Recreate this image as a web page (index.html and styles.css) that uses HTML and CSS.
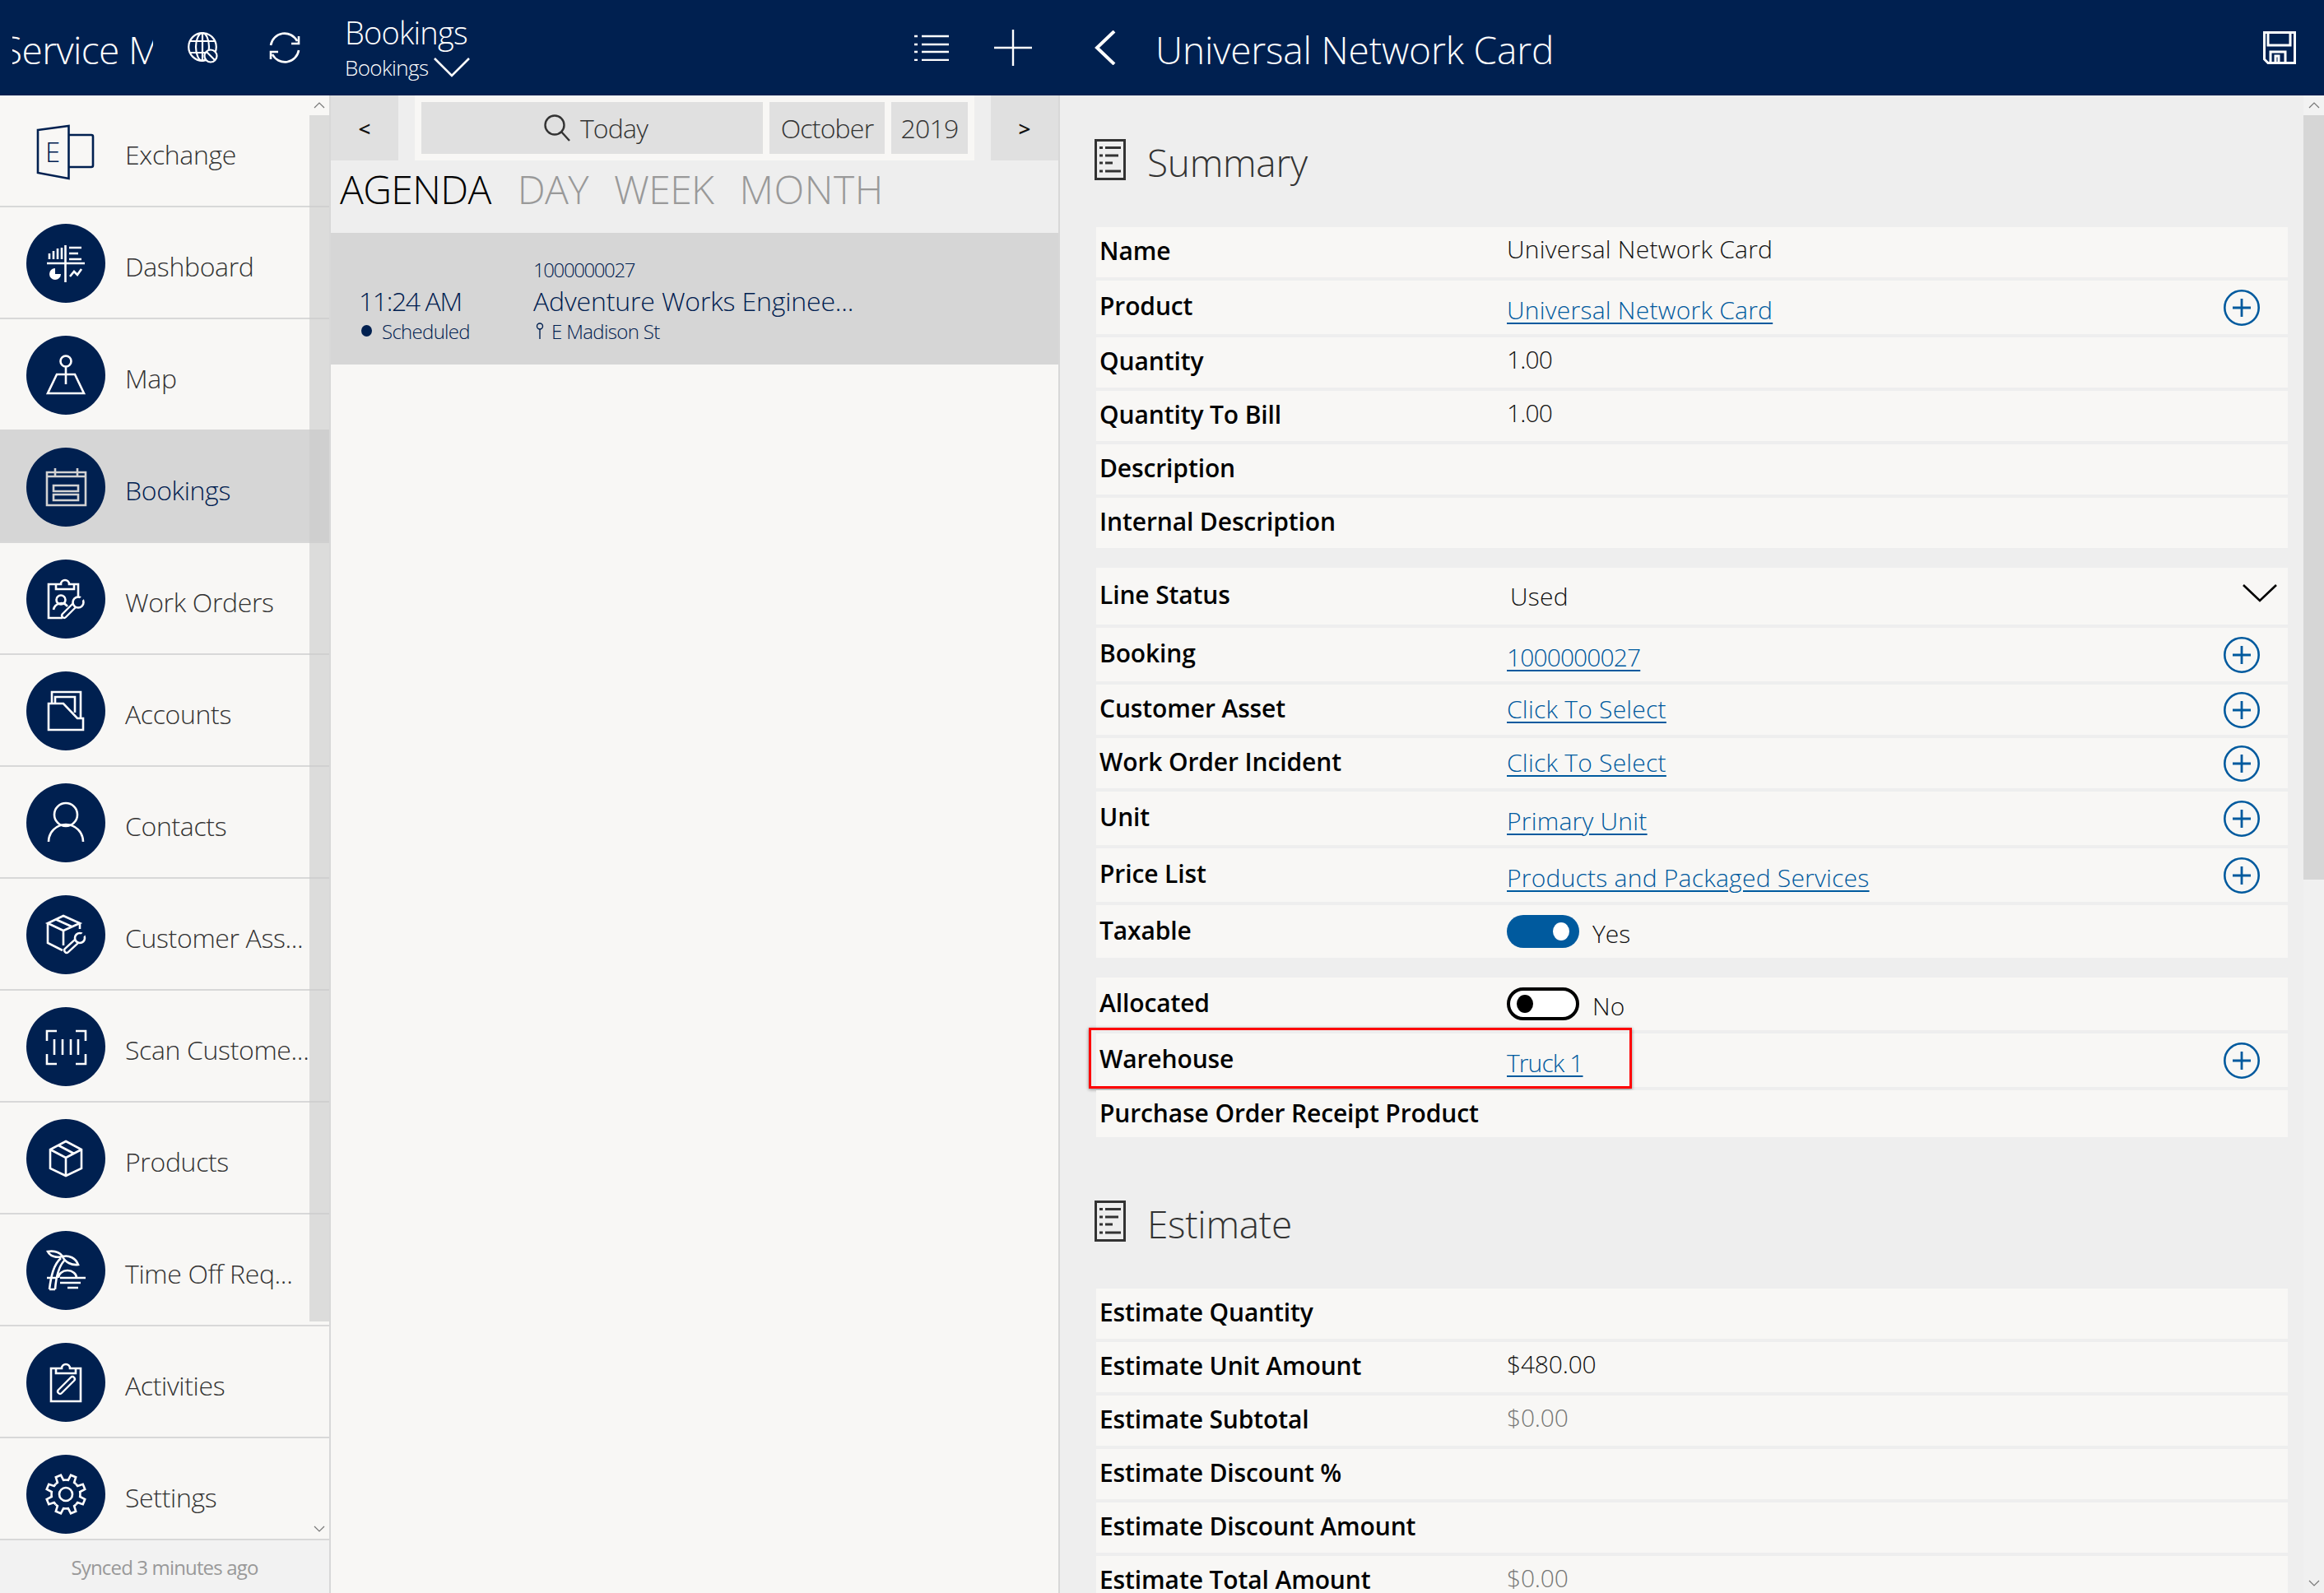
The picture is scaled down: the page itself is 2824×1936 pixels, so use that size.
FILE: index.html
```html
<!DOCTYPE html>
<html lang="en">
<head>
<meta charset="utf-8">
<title>Bookings</title>
<link rel="stylesheet" href="styles.css">
</head>
<body>
<svg class="sprite" xmlns="http://www.w3.org/2000/svg">
  <symbol id="plus" viewBox="0 0 44 44"><circle cx="22" cy="22" r="20.7" fill="none" stroke="#005a9e" stroke-width="2.6"/><path d="M11 22H33M22 11V33" fill="none" stroke="#005a9e" stroke-width="2.8"/></symbol>
  <symbol id="doc" viewBox="0 0 38 50"><path d="M1.5 1.5H36.5V48.5H1.5Z" fill="none" stroke="#333" stroke-width="3"/><path d="M6 10.5H10M13 10.5H32M6 20H10M13 20H29M6 29H10M13 29H22M6 39H10M13 39H32" fill="none" stroke="#333" stroke-width="3"/></symbol>
  <path id="tooth" d="M-6.7-16.2L-3.9-17L-3.3-23.8L3.3-23.8L3.9-17L6.7-16.2"/>
</svg>

<header class="topbar">
  <div class="bar-nav">
    <div class="brand"><span class="brand-text">Service Management</span></div>
    <svg class="ico-globe" viewBox="0 0 38 38"><circle cx="19" cy="18" r="16.8"/><ellipse cx="19" cy="18" rx="8" ry="16.8"/><path d="M19 1V35M4 11H34M4 25H24"/><circle class="fill-nv" cx="29" cy="29" r="7.5"/><path d="M24 24L34 34"/></svg>
    <svg class="ico-sync" viewBox="0 0 38 38"><path d="M2 16A17 17 0 0 1 34 11M36 5V14H27M36 22A17 17 0 0 1 4 27M2 33V24H11"/></svg>
  </div>
  <div class="bar-list">
    <div class="bar-titles">
      <div class="bar-title">Bookings</div>
      <div class="bar-sub">Bookings <svg class="ico-chev" viewBox="0 0 44 24"><path d="M1 1L22 22L43 1"/></svg></div>
    </div>
    <svg class="ico-list" viewBox="0 0 42 32"><path d="M0 2H4M9 2H42M0 12H4M9 12H42M0 21H4M9 21H42M0 31H4M9 31H42"/></svg>
    <svg class="ico-add" viewBox="0 0 46 44"><path d="M0 22H46M23 0V44"/></svg>
  </div>
  <div class="bar-detail">
    <svg class="ico-back" viewBox="0 0 26 42"><path d="M24 1L3 21L24 41"/></svg>
    <div class="detail-title">Universal Network Card</div>
    <svg class="ico-save" viewBox="0 0 40 40"><path d="M1.5 1.5H38.5V38.5H6L1.5 34Z"/><path d="M6 1.5V17H33V1.5M9 38.5V25H27V38.5M15 38.5V30H19V38.5"/></svg>
  </div>
</header>

<main class="main">
  <nav class="nav">
    <div class="nav-list">
      <a class="nav-row">
        <span class="nav-icon"><svg viewBox="0 0 96 96"><path class="navy-line" d="M14 22L51.5 17V81L14 74Z"/><path class="navy-line" d="M52 28H79Q81 28 81 30V65Q81 67 79 67H52"/><text class="ex-e" x="23" y="61">E</text></svg></span>
        <span class="nav-label">Exchange</span>
      </a>
      <a class="nav-row">
        <span class="nav-icon disc"><svg class="ic" viewBox="0 0 96 96"><path d="M25 48H71M47.5 26V71M28 43V36M33 43V33M38 43V30M43 43V29M52 29H67M52 36H63M52 43H67"/><path d="M35 54V61H42A7 7 0 1 1 35 54Z" class="ic-fill"/><path d="M53 64L58 58L62 62L67 55"/></svg></span>
        <span class="nav-label">Dashboard</span>
      </a>
      <a class="nav-row">
        <span class="nav-icon disc"><svg class="ic" viewBox="0 0 96 96"><circle cx="48" cy="31" r="6.5"/><path d="M48 37V59M37 47H59L70 70H26Z"/></svg></span>
        <span class="nav-label">Map</span>
      </a>
      <a class="nav-row active">
        <span class="nav-icon disc"><svg class="ic" viewBox="0 0 96 96"><path d="M25 30H72V70H25ZM25 35H72M35 25V34M62 25V34M33 46H63V53H33ZM33 57H63V64H33Z"/></svg></span>
        <span class="nav-label">Bookings</span>
      </a>
      <a class="nav-row">
        <span class="nav-icon disc"><svg class="ic" viewBox="0 0 96 96"><path d="M37 30H27V71H44M57 30H63V46M36 36H58V30H52A5 5 0 0 0 42 30H36Z"/><circle cx="42" cy="49" r="5.5"/><path d="M33 61A9.5 9.5 0 0 1 50 57"/><path class="wide" d="M46 68L60 54"/><path class="nv" d="M46 68L60 54"/><circle class="fill-nv" cx="63" cy="52" r="6.5"/><path class="nv thin" d="M63 52L70 45"/></svg></span>
        <span class="nav-label">Work Orders</span>
      </a>
      <a class="nav-row">
        <span class="nav-icon disc"><svg class="ic" viewBox="0 0 96 96"><path d="M31 39V25H66V57M35 39V31H59V50M27 71V39H45L62 57H69V71Z"/></svg></span>
        <span class="nav-label">Accounts</span>
      </a>
      <a class="nav-row">
        <span class="nav-icon disc"><svg class="ic" viewBox="0 0 96 96"><circle cx="48" cy="38" r="14"/><path d="M27 71A21 21 0 0 1 69 71"/></svg></span>
        <span class="nav-label">Contacts</span>
      </a>
      <a class="nav-row">
        <span class="nav-icon disc"><svg class="ic" viewBox="0 0 96 96"><path d="M45 25L65 34L45 43L26 34ZM26 34V58L44 67M45 43V61M65 34V41M35 29L55 38"/><path class="wide" d="M49 67L62 55"/><path class="nv" d="M49 67L62 55"/><circle class="fill-nv" cx="65" cy="52" r="6"/><path class="nv thin" d="M65 52L72 45"/></svg></span>
        <span class="nav-label">Customer Ass...</span>
      </a>
      <a class="nav-row">
        <span class="nav-icon disc"><svg class="ic" viewBox="0 0 96 96"><path d="M37 29H25V41M60 29H72V41M25 57V69H37M72 57V69H60M34 39V58M44 39V58M54 39V58M63 39V58"/></svg></span>
        <span class="nav-label">Scan Custome...</span>
      </a>
      <a class="nav-row">
        <span class="nav-icon disc"><svg class="ic" viewBox="0 0 96 96"><path d="M48 27L67 37V60L48 69L29 60V37ZM29 37L48 47L67 37M48 47V69M39 32L58 42"/></svg></span>
        <span class="nav-label">Products</span>
      </a>
      <a class="nav-row">
        <span class="nav-icon disc"><svg class="ic" viewBox="0 0 96 96"><path d="M28 71C30 55 33 41 42 33M35 71C36 57 39 44 46 36M28 71H35M44 31C40 25 33 24 26 25C29 31 37 33 44 31ZM44 31C52 29 60 33 63 41C55 42 47 38 44 31ZM25 57H36M41 57H72M39 57A11 9 0 0 1 61 57M41 63H66M50 69H63"/></svg></span>
        <span class="nav-label">Time Off Req...</span>
      </a>
      <a class="nav-row">
        <span class="nav-icon disc"><svg class="ic" viewBox="0 0 96 96"><path d="M30 31H36V37H60V31H66V71H30ZM36 31H43A5 5 0 0 1 53 31H60"/><path class="wide" d="M41 59L56 44"/><path class="nv" d="M41 59L56 44"/></svg></span>
        <span class="nav-label">Activities</span>
      </a>
      <a class="nav-row">
        <span class="nav-icon disc"><svg class="ic" viewBox="0 0 96 96"><circle cx="48" cy="48" r="8"/><g transform="translate(48 48)"><use href="#tooth" transform="rotate(22.5)"/><use href="#tooth" transform="rotate(67.5)"/><use href="#tooth" transform="rotate(112.5)"/><use href="#tooth" transform="rotate(157.5)"/><use href="#tooth" transform="rotate(202.5)"/><use href="#tooth" transform="rotate(247.5)"/><use href="#tooth" transform="rotate(292.5)"/><use href="#tooth" transform="rotate(337.5)"/></g></svg></span>
        <span class="nav-label">Settings</span>
      </a>
      <div class="nav-scroll">
        <div class="nav-up"><svg class="ico-tiny" viewBox="0 0 14 8"><path d="M1 7L7 1L13 7"/></svg></div>
        <div class="nav-thumb"></div>
        <div class="nav-down"><svg class="ico-tiny" viewBox="0 0 14 8"><path d="M1 1L7 7L13 1"/></svg></div>
      </div>
    </div>
    <div class="nav-foot">Synced 3 minutes ago</div>
  </nav>

  <section class="list">
    <div class="toolbar">
      <button class="step">&lt;</button>
      <div class="date-box">
        <div class="date-cell date-today"><svg class="ico-search" viewBox="0 0 32 33"><circle cx="13" cy="13" r="11.5"/><path d="M21 21L31 32"/></svg>Today</div>
        <div class="date-cell date-month">October</div>
        <div class="date-cell date-year">2019</div>
      </div>
      <button class="step">&gt;</button>
    </div>
    <div class="tabs">
      <span class="tab tab-on">AGENDA</span>
      <span class="tab">DAY</span>
      <span class="tab">WEEK</span>
      <span class="tab tab-wide">MONTH</span>
    </div>
    <div class="agenda">
      <div class="ag-num">1000000027</div>
      <div class="ag-time">11:24 AM</div>
      <div class="ag-title">Adventure Works Enginee...</div>
      <div class="ag-status"><span class="dot"></span>Scheduled</div>
      <div class="ag-addr"><svg class="ico-pin" viewBox="0 0 10 20"><circle cx="5" cy="4.5" r="3.5"/><path d="M5 8V20"/></svg>E Madison St</div>
    </div>
  </section>

  <section class="detail">
    <div class="sec-head"><svg class="ico-doc"><use href="#doc"/></svg><h2 class="sec-title">Summary</h2></div>
    <div class="group">
      <div class="row"><span class="label">Name</span><span class="val">Universal Network Card</span></div>
      <div class="row h65"><span class="label">Product</span><a class="link">Universal Network Card</a><svg class="ico-plus"><use href="#plus"/></svg></div>
      <div class="row"><span class="label">Quantity</span><span class="val num">1.00</span></div>
      <div class="row"><span class="label">Quantity To Bill</span><span class="val num">1.00</span></div>
      <div class="row"><span class="label">Description</span></div>
      <div class="row"><span class="label">Internal Description</span></div>
    </div>
    <div class="group">
      <div class="row h69"><span class="label">Line Status</span><span class="val val-select">Used</span><svg class="ico-drop" viewBox="0 0 42 22"><path d="M1 1L21 20L41 1"/></svg></div>
      <div class="row h65"><span class="label">Booking</span><a class="link num">1000000027</a><svg class="ico-plus"><use href="#plus"/></svg></div>
      <div class="row"><span class="label">Customer Asset</span><a class="link link-flat">Click To Select</a><svg class="ico-plus"><use href="#plus"/></svg></div>
      <div class="row"><span class="label">Work Order Incident</span><a class="link link-flat">Click To Select</a><svg class="ico-plus"><use href="#plus"/></svg></div>
      <div class="row h65"><span class="label">Unit</span><a class="link">Primary Unit</a><svg class="ico-plus"><use href="#plus"/></svg></div>
      <div class="row h65"><span class="label">Price List</span><a class="link">Products and Packaged Services</a><svg class="ico-plus"><use href="#plus"/></svg></div>
      <div class="row h64"><span class="label">Taxable</span><span class="toggle toggle-on"><span class="knob"></span></span><span class="toggle-text">Yes</span></div>
    </div>
    <div class="group">
      <div class="row h64"><span class="label">Allocated</span><span class="toggle toggle-off"><span class="knob"></span></span><span class="toggle-text">No</span></div>
      <div class="row h65 flagged"><span class="label">Warehouse</span><a class="link num">Truck 1</a><svg class="ico-plus"><use href="#plus"/></svg><span class="flag"></span></div>
      <div class="row h57"><span class="label">Purchase Order Receipt Product</span></div>
    </div>
    <div class="sec-head sec-next"><svg class="ico-doc"><use href="#doc"/></svg><h2 class="sec-title">Estimate</h2></div>
    <div class="group">
      <div class="row"><span class="label">Estimate Quantity</span></div>
      <div class="row"><span class="label">Estimate Unit Amount</span><span class="val money">$480.00</span></div>
      <div class="row"><span class="label">Estimate Subtotal</span><span class="val money val-grey">$0.00</span></div>
      <div class="row"><span class="label">Estimate Discount %</span></div>
      <div class="row"><span class="label">Estimate Discount Amount</span></div>
      <div class="row"><span class="label">Estimate Total Amount</span><span class="val money val-grey">$0.00</span></div>
    </div>
    <div class="detail-scroll">
      <div class="d-up"><svg class="ico-tiny" viewBox="0 0 14 8"><path d="M1 7L7 1L13 7"/></svg></div>
      <div class="d-thumb"></div>
      <div class="d-down"><svg class="ico-tiny" viewBox="0 0 14 8"><path d="M1 1L7 7L13 1"/></svg></div>
    </div>
  </section>
</main>
</body>
</html>
```
FILE: styles.css
```css
* { box-sizing: border-box; }
html, body { margin: 0; height: 100%; overflow: hidden; }
body {
  display: flex;
  flex-direction: column;
  width: 2824px;
  height: 1936px;
  background: #f8f7f5;
  font-family: "Open Sans", "Noto Sans", sans-serif;
  font-weight: 300;
  color: #333;
}
svg { display: block; flex: none; }
.sprite { width: 0; height: 0; position: absolute; }
a { color: inherit; text-decoration: none; }

/* Top bar */
.topbar {
  flex: none;
  height: 116px;
  display: flex;
  background: #002050;
  color: #fff;
}
.topbar svg { fill: none; stroke: #fff; }
.bar-nav { width: 402px; flex: none; display: flex; align-items: center; }
.brand { width: 171px; margin-left: 15px; overflow: hidden; white-space: nowrap; font-size: 46px; line-height: 60px; padding-top: 4px; letter-spacing: -0.6px; }
.brand-text { display: block; text-indent: -13px; }
.ico-globe { width: 38px; height: 38px; margin: 0 0 0 41px; stroke-width: 2.2; }
.ico-globe .fill-nv { fill: #002050; }
.ico-sync { width: 38px; height: 38px; margin-left: 62px; stroke-width: 2.6; }
.bar-list { width: 886px; flex: none; display: flex; align-items: flex-start; padding-left: 17px; }
.bar-titles { width: 692px; padding-top: 16px; }
.bar-title { font-size: 38px; line-height: 46px; letter-spacing: -0.8px; }
.bar-sub { display: flex; align-items: center; font-size: 26px; line-height: 32px; letter-spacing: -0.6px; gap: 7px; margin-top: 4px; }
.ico-chev { width: 44px; height: 24px; stroke-width: 2.6; }
.ico-list { width: 42px; height: 32px; margin-top: 42px; stroke-width: 2.4; }
.ico-add { width: 46px; height: 44px; margin: 36px 0 0 55px; stroke-width: 2.4; }
.bar-detail { flex: 1; display: flex; align-items: center; padding: 0 34px 0 42px; }
.ico-back { width: 26px; height: 42px; stroke-width: 4; margin-right: 48px; }
.detail-title { flex: 1; font-size: 46px; line-height: 60px; padding-top: 4px; letter-spacing: -0.15px; }
.ico-save { width: 40px; height: 40px; stroke-width: 3; }

/* Layout */
.main { flex: 1; min-height: 0; display: flex; }

/* Nav */
.nav { width: 402px; flex: none; display: flex; flex-direction: column; }
.nav-list { flex: 1; min-height: 0; position: relative; overflow: hidden; border-bottom: 2px solid #d8d8d8; border-right: 2px solid #d8d8d8; }
.nav-row { display: flex; align-items: flex-start; height: 136px; padding: 20px 0 0 32px; border-bottom: 2px solid #d8d8d8; }
.nav-row.active { background: #d6d6d6; color: #002050; margin-top: -2px; height: 138px; padding-top: 22px; }
.nav-icon { width: 96px; height: 96px; flex: none; border-radius: 50%; }
.disc { background: #002050; }
.nav-icon svg { width: 96px; height: 96px; }
.ic { fill: none; stroke: #fff; stroke-width: 2.6; }
.ic use { stroke: #fff; }
.active .ic { stroke: #d2d2d2; }
.ic .ic-fill { fill: #fff; stroke: none; }
.ic .wide { stroke-width: 8; stroke-linecap: round; }
.ic .nv { stroke: #002050; stroke-width: 3.2; stroke-linecap: round; }
.ic .thin { stroke-width: 4; stroke-linecap: butt; }
.ic .fill-nv { fill: #002050; }
.navy-line { fill: none; stroke: #002050; stroke-width: 2.6; }
.ex-e { font-size: 33px; fill: #002050; font-weight: 300; }
.nav-label { margin-left: 24px; font-size: 32px; line-height: 44px; padding-top: 30px; letter-spacing: -0.35px; white-space: nowrap; box-sizing: content-box; }
.nav-scroll { position: absolute; top: 0; right: 0; bottom: 0; width: 24px; display: flex; flex-direction: column; }
.nav-up { height: 24px; flex: none; background: #f8f7f5; display: flex; align-items: center; justify-content: center; }
.nav-thumb { height: 1466px; flex: none; background: rgba(203, 203, 203, .62); }
.nav-down { flex: 1; display: flex; align-items: flex-end; justify-content: center; padding-bottom: 8px; }
.ico-tiny { width: 14px; height: 8px; fill: none; stroke: #777; stroke-width: 1.2; }
.nav-foot { flex: none; height: 64px; background: #f2f2f2; border-right: 2px solid #d8d8d8; text-align: center; font-size: 24px; line-height: 65px; color: #999; font-weight: 400; letter-spacing: -0.85px; }

/* List */
.list { width: 886px; flex: none; border-right: 2px solid #d8d8d8; display: flex; flex-direction: column; }
.toolbar { flex: none; height: 79px; display: flex; justify-content: space-between; background: #eee; }
.step { width: 82px; border: 0; padding: 0; background: #e0e0e0; font: 600 26px/1 "Open Sans", sans-serif; color: #111; }
.date-box { display: flex; gap: 8px; padding: 8px; width: 680px; background: #f8f7f5; }
.date-cell { display: flex; align-items: center; justify-content: center; background: #e0e0e0; font-size: 32px; letter-spacing: -0.8px; color: #333; }
.date-today { width: 415px; gap: 12px; padding-left: 9px; }
.date-month { width: 140px; }
.date-year { width: 93px; }
.ico-search { width: 32px; height: 33px; fill: none; stroke: #333; stroke-width: 2.4; }
.tabs { flex: none; height: 88px; display: flex; gap: 31px; padding: 5px 0 0 11px; background: #eee; }
.tab { font-size: 48px; line-height: 60px; color: #999; letter-spacing: -0.6px; }
.tab-on { color: #000; margin-right: 1px; }
.tab-wide { letter-spacing: 0.6px; }
.agenda {
  flex: none;
  height: 160px;
  background: #d6d6d6;
  display: grid;
  grid-template-columns: 212px 1fr;
  grid-template-rows: 38px 38px 36px;
  padding: 25px 0 0 34px;
  color: #002050;
  align-items: center;
}
.ag-num { grid-column: 2; grid-row: 1; font-size: 24px; letter-spacing: -1.4px; }
.ag-time { grid-column: 1; grid-row: 2; font-size: 32px; letter-spacing: -1.4px; }
.ag-title { grid-column: 2; grid-row: 2; font-size: 32px; letter-spacing: -0.15px; white-space: nowrap; }
.ag-status { grid-column: 1; grid-row: 3; display: flex; align-items: center; font-size: 24px; letter-spacing: -0.7px; padding-left: 3px; }
.dot { width: 13px; height: 14px; border-radius: 50%; background: #002050; margin-right: 12px; }
.ag-addr { grid-column: 2; grid-row: 3; display: flex; align-items: center; font-size: 24px; letter-spacing: -0.65px; padding-left: 3px; }
.ico-pin { width: 10px; height: 20px; fill: none; stroke: #002050; stroke-width: 1.4; margin-right: 9px; }

/* Detail */
.detail { flex: 1; min-width: 0; position: relative; overflow: hidden; background: #eee; padding: 0 44px; }
.sec-head { height: 160px; display: flex; align-items: flex-start; padding-top: 53px; margin-left: -2px; }
.sec-next { margin-top: 24px; }
.ico-doc { width: 38px; height: 50px; margin-right: 26px; }
.sec-title { margin: -3px 0 0; font-size: 46px; line-height: 62px; font-weight: 300; color: #333; letter-spacing: -0.3px; }
.group { display: flex; flex-direction: column; gap: 4px; margin-bottom: 24px; }
.row { position: relative; display: flex; align-items: center; height: 61px; flex: none; background: #f8f7f5; }
.h57 { height: 57px; }
.h64 { height: 64px; }
.h65 { height: 65px; }
.h69 { height: 69px; }
.h64 .label, .h57 .label { padding-bottom: 2px; }
.label { width: 499px; flex: none; padding: 0 0 4px 4px; font-size: 30px; line-height: 40px; font-weight: 600; color: #000; letter-spacing: -0.12px; white-space: nowrap; }
.val { padding-bottom: 8px; font-size: 30px; line-height: 40px; color: #111; letter-spacing: 0.24px; }
.val-grey { color: #777; }
.val-select { padding: 0 0 0 4px; }
.link { padding-top: 6px; font-size: 30px; line-height: 40px; color: #005a9e; letter-spacing: 0.24px; text-decoration: underline; text-underline-offset: 4px; text-decoration-thickness: 2px; }
.link-flat { padding-top: 0; padding-bottom: 2px; }
.val.num, .link.num { letter-spacing: -0.9px; }
.val.money { letter-spacing: -0.2px; }
.ico-plus { width: 44px; height: 44px; margin-left: auto; margin-right: 34px; }
.ico-drop { width: 42px; height: 22px; margin: -8px 13px 0 auto; fill: none; stroke: #000; stroke-width: 2.6; }
.toggle { display: flex; align-items: center; width: 88px; height: 40px; border-radius: 20px; }
.toggle-on { background: #005a9e; justify-content: flex-end; padding-right: 12px; }
.toggle-off { background: #fff; border: 4px solid #000; padding-left: 8px; }
.knob { width: 20px; height: 22px; border-radius: 50%; }
.toggle-on .knob { background: #fff; }
.toggle-off .knob { background: #000; }
.toggle-text { margin-left: 16px; padding-top: 5px; font-size: 30px; line-height: 40px; color: #111; letter-spacing: 0; }
.flag { position: absolute; left: -9px; top: -7px; width: 660px; height: 74px; border: 3px solid #f00; box-shadow: 0 1px 4px rgba(0, 0, 0, .45); }

.detail-scroll { position: absolute; top: 0; right: 0; bottom: 0; width: 25px; display: flex; flex-direction: column; background: #f0f0f0; }
.d-up { height: 24px; flex: none; display: flex; align-items: center; justify-content: center; background: #f2f2f2; }
.d-thumb { height: 929px; flex: none; background: #d6d6d6; }
.d-down { flex: 1; display: flex; align-items: flex-end; justify-content: center; padding-bottom: 8px; }
```
